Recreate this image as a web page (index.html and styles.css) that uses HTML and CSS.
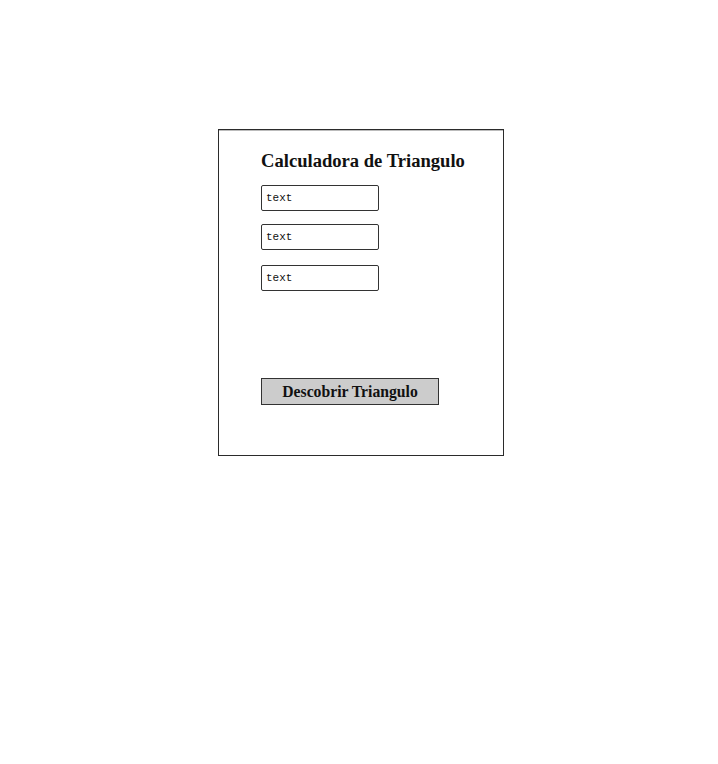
FILE: index.html
```html
<!DOCTYPE html>
<html lang="pt">
<head>
  <meta charset="UTF-8">
  <title>Calculadora de Triangulo</title>
  <link rel="stylesheet" href="styles.css">
</head>
<body>
  <div class="frame">
    <h1>Calculadora de Triangulo</h1>
    <div class="fields">
      <input class="field" type="text" placeholder="text">
      <input class="field" type="text" placeholder="text">
      <input class="field third" type="text" placeholder="text">
    </div>
    <button class="btn">Descobrir Triangulo</button>
  </div>
</body>
</html>
```

FILE: styles.css
```css
body {
  margin: 0;
  padding: 0;
  background: #fff;
  font-family: "Liberation Serif", "DejaVu Serif", serif;
}
.frame {
  box-sizing: border-box;
  margin: 129px 0 0 218px;
  width: 286px;
  height: 327px;
  border: 1px solid #2b2b2b;
  box-shadow: inset 0 1px 0 #bbb;
  padding: 20px 0 0 42px;
}
h1 {
  margin: 0;
  font-size: 18.6px;
  font-weight: bold;
  color: #111;
  line-height: 22px;
}
.fields {
  display: flex;
  flex-direction: column;
  align-items: flex-start;
  margin-top: 13px;
  gap: 13px;
}
.field {
  box-sizing: border-box;
  width: 118px;
  height: 26px;
  margin: 0;
  border: 1px solid #333;
  border-radius: 2px;
  padding: 0 4px;
  font-family: "Liberation Mono", monospace;
  font-size: 11px;
  background: #fff;
}
.field::placeholder {
  color: #111;
}
.third {
  margin-top: 2px;
}
.btn {
  display: block;
  box-sizing: border-box;
  margin-top: 87px;
  width: 178px;
  height: 27px;
  border: 1px solid #333;
  background: #cccccc;
  font-family: "Liberation Serif", "DejaVu Serif", serif;
  font-size: 15.7px;
  font-weight: bold;
  color: #111;
  padding: 0;
}
```
